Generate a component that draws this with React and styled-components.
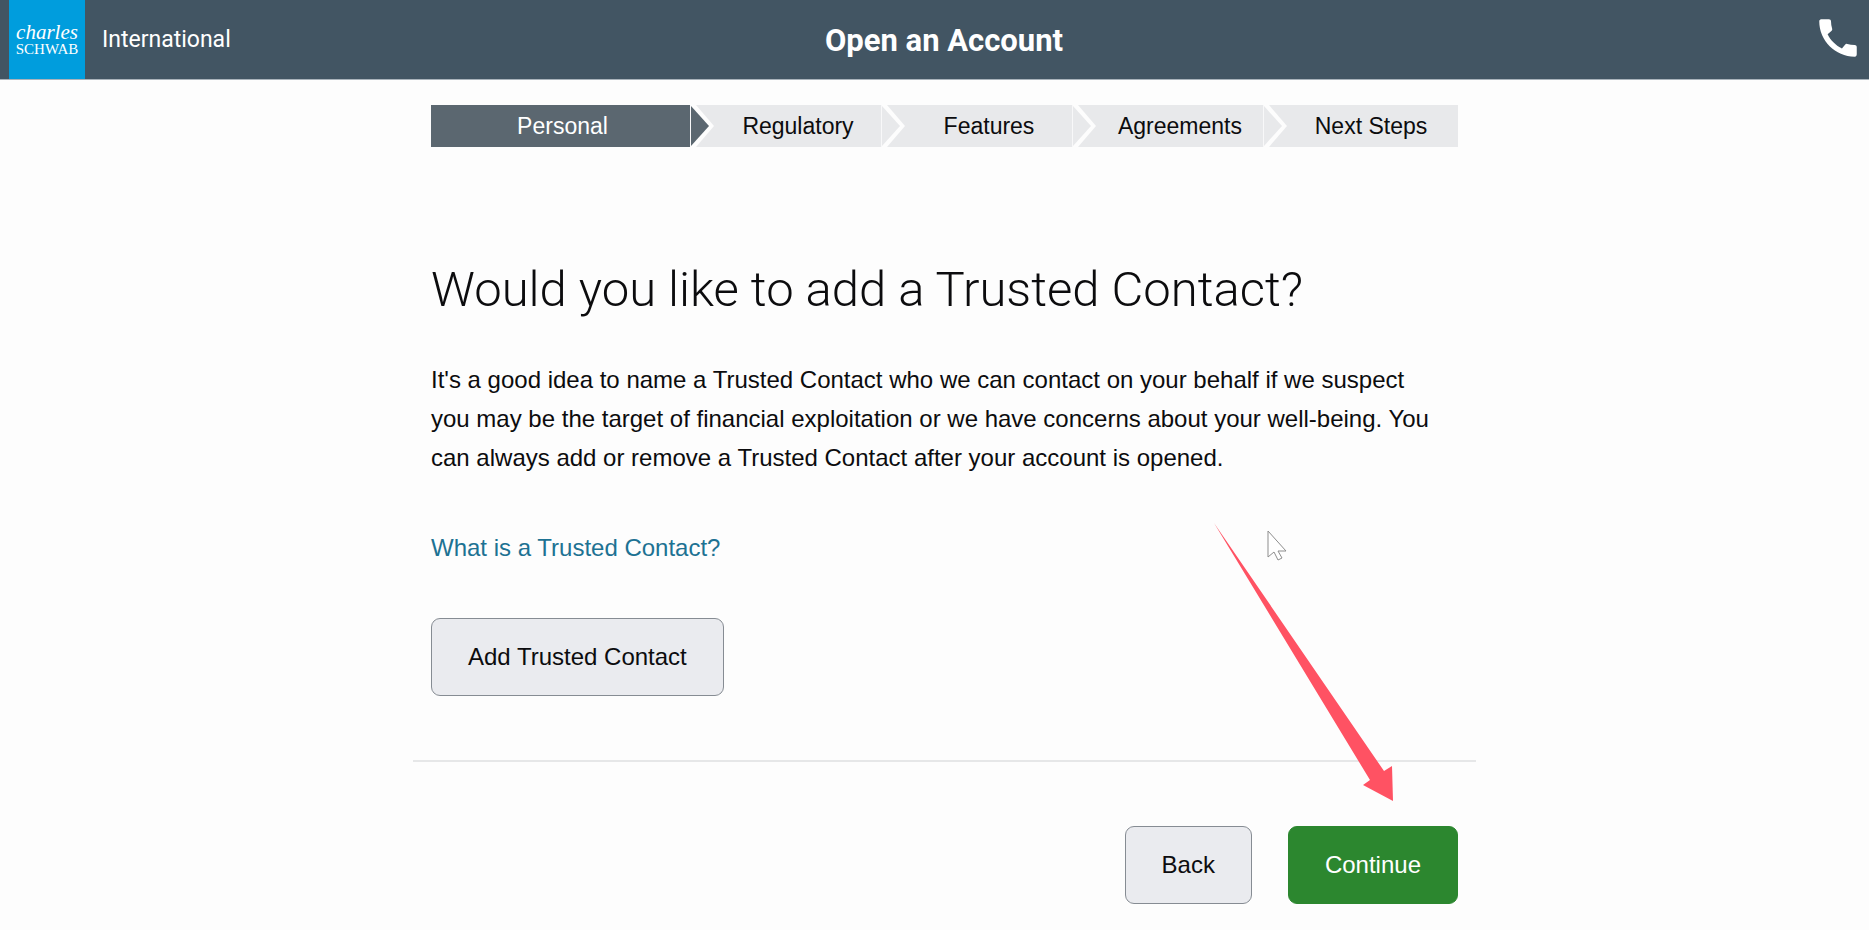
import React from "react";
import styled, { createGlobalStyle } from "styled-components";
import { MdCall } from "react-icons/md";

const GlobalStyle = createGlobalStyle`
  *, *::before, *::after { box-sizing: border-box; }
  body {
    margin: 0;
    background: #fdfdfd;
    color: #0c0c0e;
    font-family: "Liberation Sans", Arial, sans-serif;
    font-size: 24px;
  }
`;

const Header = styled.header`
  display: grid;
  grid-template-columns: 1fr auto 1fr;
  align-items: center;
  height: 80px;
  padding: 0 6px 0 9px;
  background: #425563;
  border-bottom: 1px solid #a9b3bb;
  color: #fff;
  font-family: Roboto, "Liberation Sans", sans-serif;
`;

const Brand = styled.div`
  display: flex;
  align-items: center;
  align-self: stretch;
  gap: 17px;
`;

const Logo = styled.a`
  display: flex;
  flex-direction: column;
  align-items: center;
  justify-content: center;
  align-self: stretch;
  width: 76px;
  background: #009ddd;
  color: #fff;
  font-family: "Liberation Serif", "Times New Roman", serif;
  text-decoration: none;
`;

const LogoScript = styled.span`
  font-size: 21px;
  font-style: italic;
  line-height: 18px;
`;

const LogoCaps = styled.span`
  font-size: 15px;
  line-height: 16px;
`;

const Region = styled.span`
  font-size: 23px;
  line-height: 32px;
`;

const PageName = styled.div`
  padding: 2px 0 0 16px;
  font-size: 31px;
  font-weight: 700;
  line-height: 40px;
`;

const CallButton = styled.button`
  display: flex;
  justify-self: end;
  padding: 0 0 4px;
  border: 0;
  background: none;
  color: #fff;
  cursor: pointer;
`;

const Main = styled.main`
  padding: 25px 0 25px 20px;
`;

const Column = styled.div`
  position: relative;
  max-width: 1063px;
  margin: 0 auto;
`;

const Section = styled.section`
  padding: 0 18px;
`;

const Steps = styled.ol`
  display: grid;
  grid-template-columns: 260fr repeat(3, 191fr) 194fr;
  margin: 0;
  padding: 0 18px;
  list-style: none;
`;

const Step = styled.li`
  position: relative;
  height: 42px;
  padding-left: ${(p) => (p.$current ? "4px" : p.$last ? "20px" : "24px")};
  border-right: ${(p) => (p.$last ? "0" : "1px solid #f8f8f9")};
  background: ${(p) => (p.$current ? "#5b6770" : "#e8e9eb")};
  color: ${(p) => (p.$current ? "#fff" : "#0c0c0e")};
  font-size: 23px;
  line-height: 42px;
  text-align: center;
`;

const Chevron = styled.svg`
  position: absolute;
  z-index: 1;
  top: 0;
  left: 100%;
  margin-left: 1px;
`;

const Title = styled.h1`
  margin: 109px 0 0;
  font-family: Roboto, "Liberation Sans", sans-serif;
  font-size: 49px;
  font-weight: 300;
  line-height: 68px;
`;

const Intro = styled.p`
  margin: 36px 0 0;
  padding-right: 14px;
  line-height: 39px;
`;

const HelpLink = styled.a`
  display: block;
  width: fit-content;
  margin: 51px 0;
  color: #1d7293;
  line-height: 39px;
  text-decoration: none;
`;

const Button = styled.button`
  height: 78px;
  padding: 0 36px;
  border: 1px solid ${(p) => (p.$primary ? "#2c872f" : "#868c93")};
  border-radius: 9px;
  background: ${(p) => (p.$primary ? "#2c872f" : "#eaebef")};
  color: ${(p) => (p.$primary ? "#fff" : "#0c0c0e")};
  font-family: inherit;
  font-size: 24px;
  cursor: pointer;
`;

const Divider = styled.hr`
  height: 2px;
  margin: 64px 0;
  border: 0;
  background: #e6e7e8;
`;

const Actions = styled.div`
  display: flex;
  justify-content: flex-end;
  gap: 36px;
  padding: 0 18px;
`;

const Overlay = styled.svg`
  position: absolute;
  top: 415px;
  left: 800px;
  pointer-events: none;
`;

const STEPS = ["Personal", "Regulatory", "Features", "Agreements", "Next Steps"];

export default function App() {
  return (
    <>
      <GlobalStyle />
      <Header>
        <Brand>
          <Logo href="#home">
            <LogoScript>charles</LogoScript>
            <LogoCaps>SCHWAB</LogoCaps>
          </Logo>
          <Region>International</Region>
        </Brand>
        <PageName>Open an Account</PageName>
        <CallButton type="button" aria-label="Call us">
          <MdCall size={50} />
        </CallButton>
      </Header>
      <Main>
        <Column>
          <Steps>
            {STEPS.map((name, i) => (
              <Step
                key={name}
                $current={i === 0}
                $last={i === STEPS.length - 1}
                aria-current={i === 0 ? "step" : undefined}
              >
                {name}
                {i < STEPS.length - 1 && (
                  <Chevron width="24" height="42" viewBox="0 0 24 42">
                    <path d="M0 0H5L23 21L5 42H0Z" fill="#fdfdfd" />
                    <path d="M0 1L18 21L0 41Z" fill={i === 0 ? "#5b6770" : "#e8e9eb"} />
                  </Chevron>
                )}
              </Step>
            ))}
          </Steps>
          <Section>
            <Title>Would you like to add a Trusted Contact?</Title>
            <Intro>
              It's a good idea to name a Trusted Contact who we can contact on your behalf if we
              suspect you may be the target of financial exploitation or we have concerns about
              your well-being. You can always add or remove a Trusted Contact after your account
              is opened.
            </Intro>
            <HelpLink href="#trusted-contact">What is a Trusted Contact?</HelpLink>
            <Button type="button">Add Trusted Contact</Button>
          </Section>
          <Divider />
          <Actions>
            <Button type="button">Back</Button>
            <Button type="button" $primary>Continue</Button>
          </Actions>
          <Overlay width="190" height="290" viewBox="0 0 190 290" aria-hidden="true">
            <path d="M1 3L171 251L179 246L180 281L150 265L157 260Z" fill="#ff5263" />
            <path
              d="M55 11V37L61 32L65 40L69 38L65 31H73Z"
              fill="#fff"
              stroke="#8d8d8d"
              strokeWidth="1"
              strokeLinejoin="round"
            />
          </Overlay>
        </Column>
      </Main>
    </>
  );
}
